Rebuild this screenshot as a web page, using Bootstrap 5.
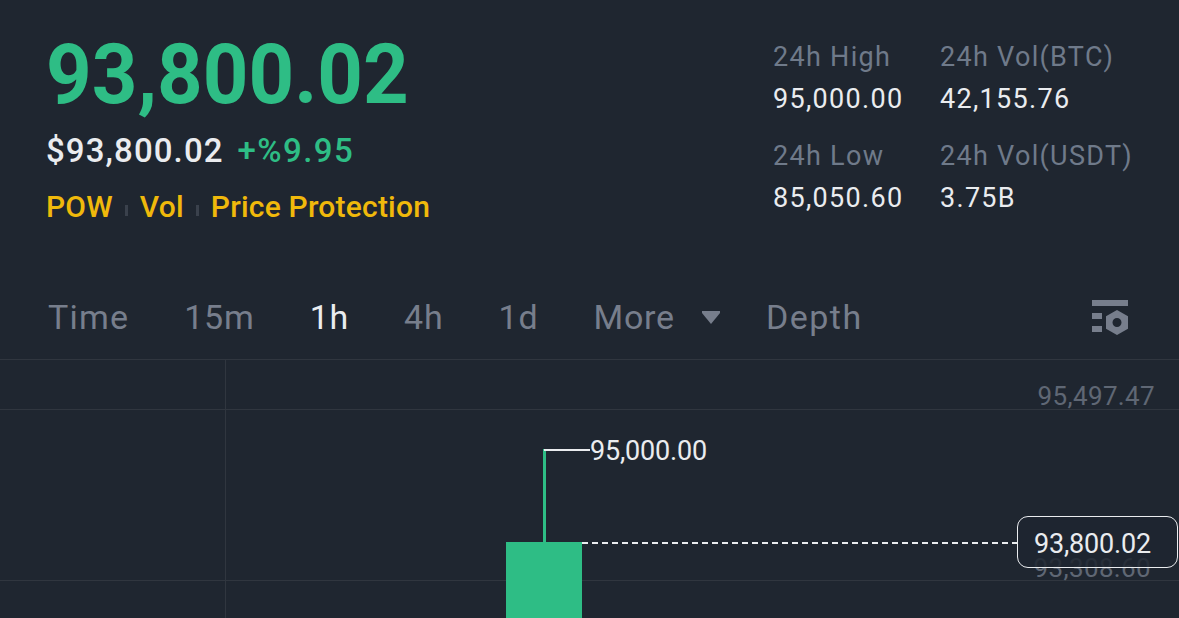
<!DOCTYPE html>
<html lang="en">
<head>
<meta charset="utf-8">
<title>BTC/USDT</title>
<link href="https://cdn.jsdelivr.net/npm/bootstrap@5.3.0/dist/css/bootstrap.min.css" rel="stylesheet">
<style>
html,body{height:100%;margin:0;overflow:hidden}
body{background:#1f2630;font-family:Roboto,"Liberation Sans",sans-serif;color:#eaecef}
.page{width:1179px;height:618px;display:flex;flex-direction:column}
.head{height:290px;padding:36px 46px 0 46px;display:flex;justify-content:space-between;flex:none}
.big{font-size:83px;line-height:78px;font-weight:700;color:#2ebd85;margin:0;transform:scaleX(.96);transform-origin:left center;white-space:nowrap}
.sub{font-size:33px;line-height:38px;margin-top:18px;display:flex;gap:14px;letter-spacing:1.1px;font-weight:500}
.up{color:#2ebd85;letter-spacing:1.4px}
.tags{font-size:30px;line-height:36px;margin-top:19px;color:#f0b90b;display:flex;align-items:center;gap:12px;letter-spacing:.2px;font-weight:500}
.tick{width:3px;height:11px;background:#3a414c;margin-top:6px}
.stats{display:grid;grid-template-columns:167px 192px;grid-auto-rows:99px;align-content:start;margin-top:2px;margin-right:1px}
.stat{font-size:27px;line-height:38px;letter-spacing:1.3px}
.stat .lbl{color:#6f7a8a;height:42px;white-space:nowrap}
.stat .val{white-space:nowrap}
.tabs{height:70px;padding:0 48px 14px;display:flex;align-items:center;gap:55px;font-size:34px;letter-spacing:.8px;color:#777e8c;border-bottom:1px solid #30363f;flex:none}
.tabs .active{color:#eaecef}
.tabs .wide{letter-spacing:1.2px}
.tabs .depth{letter-spacing:1.5px}
.more{display:flex;align-items:center;gap:27px;margin-right:-9px}
.tabs svg{display:block}
.cog{margin-left:auto;margin-right:3px}
.chart{position:relative;flex:1;overflow:hidden}
.gl{position:absolute;left:0;right:0;height:1px;background:#30363f}
.vl{position:absolute;left:225px;top:0;bottom:0;width:1px;background:#30363f}
.axis{position:absolute;right:24px;font-size:26px;line-height:30px;color:#5f6774;letter-spacing:.35px}
.axis.low{right:28px;top:193px}
.wick{position:absolute;left:543px;top:89px;width:2.5px;height:94px;background:#2ebd85}
.hi{position:absolute;left:544px;top:89px;width:46px;height:2px;background:#eaecef}
.hilbl{position:absolute;left:590px;top:76px;font-size:27px;line-height:30px;color:#eaecef;letter-spacing:-.2px}
.body-c{position:absolute;left:506px;top:182px;width:76px;height:100px;background:#2ebd85}
.dash{position:absolute;left:582px;width:436px;top:182px;height:2px;background:repeating-linear-gradient(90deg,#eaecef 0 6px,transparent 6px 10px)}
.last{position:absolute;left:1017px;top:156px;width:161px;height:52px;border:1px solid #eaecef;border-radius:11px;background:rgba(31,38,48,.85);font-size:27px;line-height:54px;padding-left:16px;color:#eaecef;letter-spacing:-.2px}
</style>
</head>
<body>
<div class="page">
  <header class="head">
    <div>
      <h1 class="big">93,800.02</h1>
      <div class="sub"><span>$93,800.02</span><span class="up">+%9.95</span></div>
      <div class="tags"><span>POW</span><i class="tick"></i><span>Vol</span><i class="tick"></i><span>Price Protection</span></div>
    </div>
    <div class="stats">
      <div class="stat"><div class="lbl">24h High</div><div class="val">95,000.00</div></div>
      <div class="stat"><div class="lbl">24h Vol(BTC)</div><div class="val">42,155.76</div></div>
      <div class="stat"><div class="lbl">24h Low</div><div class="val">85,050.60</div></div>
      <div class="stat"><div class="lbl">24h Vol(USDT)</div><div class="val">3.75B</div></div>
    </div>
  </header>
  <nav class="tabs">
    <span class="wide">Time</span><span>15m</span><span class="active">1h</span><span>4h</span><span>1d</span>
    <span class="more">More
      <svg width="18" height="14" viewBox="0 0 18 14"><path d="M0 0H18V2L9 13L0 2Z" fill="#777e8c"/></svg>
    </span>
    <span class="depth">Depth</span>
    <svg class="cog" width="36" height="35" viewBox="0 0 36 35"><path d="M0 0H36V6H0ZM0 13H10V19H0ZM0 26H10V32H0Z" fill="#777e8c"/><path fill-rule="evenodd" d="M25 10L36 16.300V28.700L25 35L14 28.700V16.300ZM25 18A4.500 4.500 0 1 0 25 27A4.500 4.500 0 1 0 25 18Z" fill="#777e8c"/></svg>
  </nav>
  <section class="chart">
    <div class="gl" style="top:49px"></div>
    <div class="gl" style="top:220px"></div>
    <div class="vl"></div>
    <div class="axis" style="top:21px">95,497.47</div>
    <div class="axis low">93,308.60</div>
    <div class="wick"></div><div class="hi"></div>
    <div class="hilbl">95,000.00</div>
    <div class="body-c"></div>
    <div class="dash"></div>
    <div class="last">93,800.02</div>
  </section>
</div>
<script src="https://cdn.jsdelivr.net/npm/bootstrap@5.3.0/dist/js/bootstrap.bundle.min.js"></script>
</body>
</html>
